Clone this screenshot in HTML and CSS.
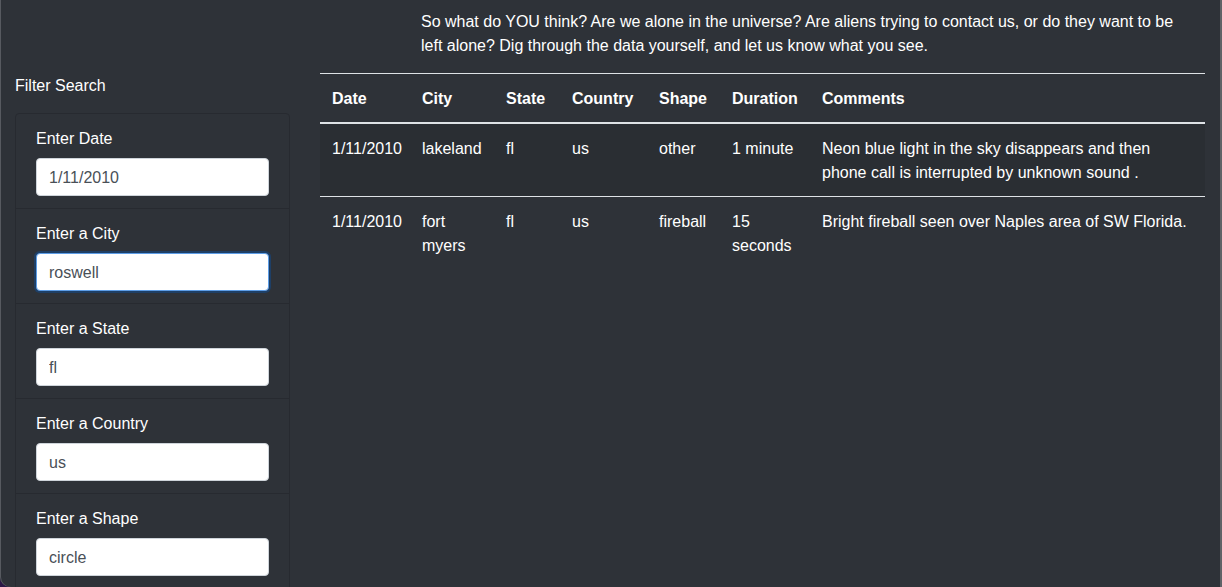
FILE: index.html
```html
<!DOCTYPE html>
<html lang="en">
<head>
<meta charset="utf-8">
<title>UFO Sightings</title>
<link rel="stylesheet" href="styles.css">
</head>
<body>
<div class="window">
  <div class="intro-row">
    <p class="intro">So what do YOU think? Are we alone in the universe? Are aliens trying to contact us, or do they want to be left alone? Dig through the data yourself, and let us know what you see.</p>
  </div>
  <div class="main-row">
    <aside class="sidebar">
      <h5 class="filter-title">Filter Search</h5>
      <ul class="filters">
        <li class="filter">
          <label class="filter-label" for="datetime">Enter Date</label>
          <input class="field" id="datetime" type="text" value="1/11/2010">
        </li>
        <li class="filter">
          <label class="filter-label" for="city">Enter a City</label>
          <input class="field field-focus" id="city" type="text" value="roswell">
        </li>
        <li class="filter">
          <label class="filter-label" for="state">Enter a State</label>
          <input class="field" id="state" type="text" value="fl">
        </li>
        <li class="filter">
          <label class="filter-label" for="country">Enter a Country</label>
          <input class="field" id="country" type="text" value="us">
        </li>
        <li class="filter">
          <label class="filter-label" for="shape">Enter a Shape</label>
          <input class="field" id="shape" type="text" value="circle">
        </li>
      </ul>
    </aside>
    <main class="content">
      <table class="ufo-table">
        <colgroup>
          <col class="c-date"><col class="c-city"><col class="c-state"><col class="c-country"><col class="c-shape"><col class="c-duration"><col class="c-comments">
        </colgroup>
        <thead>
          <tr><th>Date</th><th>City</th><th>State</th><th>Country</th><th>Shape</th><th>Duration</th><th>Comments</th></tr>
        </thead>
        <tbody>
          <tr class="striped"><td>1/11/2010</td><td>lakeland</td><td>fl</td><td>us</td><td>other</td><td>1 minute</td><td>Neon blue light in the sky disappears and then phone call is interrupted by unknown sound .</td></tr>
          <tr><td>1/11/2010</td><td>fort myers</td><td>fl</td><td>us</td><td>fireball</td><td>15 seconds</td><td class="nowrap">Bright fireball seen over Naples area of SW Florida.</td></tr>
        </tbody>
      </table>
    </main>
  </div>
</div>
</body>
</html>
```
FILE: styles.css
```css
html, body {
  margin: 0;
  padding: 0;
  background: #2b1746;
}
* { box-sizing: border-box; }
.window {
  height: 587px;
  overflow: hidden;
  background: #2e3238;
  box-shadow: inset 1px 0 0 #575a60, inset -2px 0 0 #5f6267;
  border-bottom-left-radius: 10px;
  color: #ffffff;
  font-family: "Liberation Sans", Arial, sans-serif;
  font-size: 16px;
  line-height: 24px;
}
.intro-row {
  padding: 10px 15px 0 421px;
}
.intro {
  margin: 0 0 15px 0;
  width: 770px;
}
.main-row {
  display: flex;
  padding: 0 15px;
}
.sidebar {
  width: 275px;
  flex: none;
}
.filter-title {
  margin: 0 0 16px 0;
  padding-top: 1px;
  height: 24px;
  font-size: 16px;
  line-height: 24px;
  font-weight: normal;
}
.filters {
  list-style: none;
  margin: 0;
  padding: 0;
  border-radius: 4px;
}
.filter {
  display: flex;
  flex-direction: column;
  padding: 12px 20px;
  border: 1px solid #272a30;
  margin-top: -1px;
}
.filter:first-child { margin-top: 0; border-radius: 4px 4px 0 0; }
.filter-label {
  display: block;
  margin-bottom: 8px;
  padding-top: 1px;
  height: 24px;
}
.field {
  display: block;
  width: 100%;
  height: 38px;
  padding: 7px 12px 5px;
  font-family: inherit;
  font-size: 16px;
  line-height: 24px;
  color: #495057;
  background: #ffffff;
  border: 1px solid #ced4da;
  border-radius: 4px;
  outline: none;
}
.field-focus {
  border-color: #5d9de6;
  box-shadow: 0 0 0 2px #1e3f66;
}
.content {
  margin-left: 30px;
  flex: 1;
}
.ufo-table {
  width: 885px;
  border-collapse: collapse;
  table-layout: fixed;
  color: #ffffff;
}
.c-date { width: 90px; }
.c-city { width: 84px; }
.c-state { width: 66px; }
.c-country { width: 87px; }
.c-shape { width: 73px; }
.c-duration { width: 90px; }
.c-comments { width: 395px; }
.ufo-table th, .ufo-table td {
  padding: 13px 12px 11px;
  text-align: left;
  vertical-align: top;
  border-top: 1px solid #dee2e6;
}
.ufo-table th {
  font-weight: bold;
  border-bottom: 2px solid #dee2e6;
}
.ufo-table thead + tbody tr:first-child td { border-top: none; }
.striped td { background: #2a2e33; }
.nowrap { white-space: nowrap; }
```
